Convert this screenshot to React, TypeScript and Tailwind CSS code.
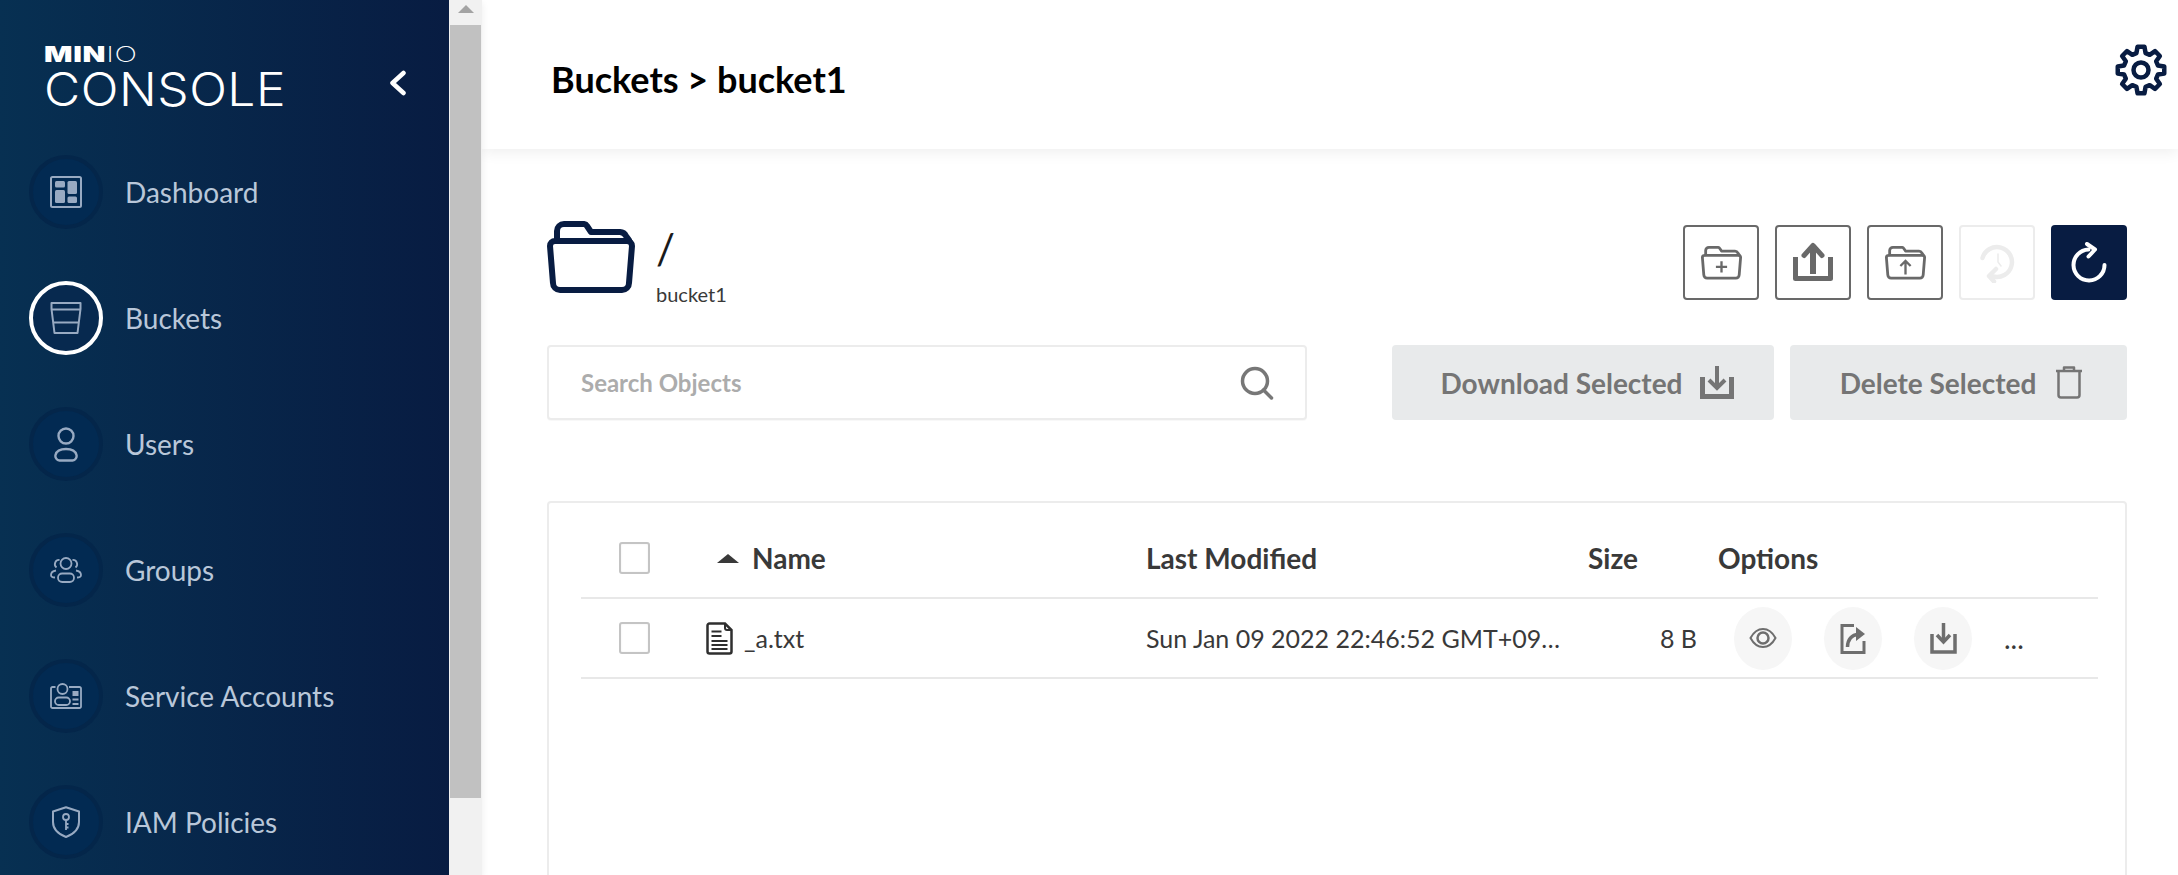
import {ReactNode} from "react";

const navItems = [
  {name: "Dashboard", icon: <DashboardIcon/>},
  {name: "Buckets", icon: <BucketIcon/>, active: true},
  {name: "Users", icon: <UserIcon/>},
  {name: "Groups", icon: <GroupIcon/>},
  {name: "Service Accounts", icon: <AccountIcon/>},
  {name: "IAM Policies", icon: <ShieldIcon/>},
]

function DashboardIcon() {
  return (
    <svg width="32" height="32" viewBox="0 0 32 32" fill="currentColor">
      <rect x="1" y="1" width="30" height="30" rx="1.5" fill="none" stroke="currentColor" strokeWidth="2"/>
      <rect x="5" y="5" width="10" height="6.5" rx="1.5"/>
      <rect x="5" y="14" width="10" height="13" rx="1.5"/>
      <rect x="17.5" y="5" width="9.5" height="13" rx="1.5"/>
      <rect x="17.5" y="20.5" width="9.5" height="6.5" rx="1.5"/>
    </svg>
  )
}

function BucketIcon() {
  return (
    <svg width="32" height="32" viewBox="0 0 32 32" fill="none" stroke="currentColor" strokeWidth="2">
      <path d="M1.5 1h29v6l-3 24h-23l-3-24z" strokeLinejoin="round"/>
      <path d="M1.5 7.5h29M3.5 20.5h25"/>
    </svg>
  )
}

function UserIcon() {
  return (
    <svg width="24" height="35" viewBox="0 0 24 35" fill="none" stroke="currentColor" strokeWidth="2.400">
      <circle cx="12" cy="9" r="7.500"/>
      <path d="M5.500 33.500h13a4.500 4.500 0 0 0 4-5.500c-1-4-5.500-6-10.500-6s-9.500 2-10.500 6a4.500 4.500 0 0 0 4 5.500z"/>
    </svg>
  )
}

function GroupIcon() {
  return (
    <svg width="32" height="26" viewBox="0 0 32 26" fill="none" stroke="currentColor" strokeWidth="1.8">
      <circle cx="16" cy="6.5" r="5.5"/>
      <rect x="8" y="16.5" width="16" height="8.5" rx="4.2"/>
      <path d="M9.5 3a4.2 4.2 0 0 0-3 7.5M22.5 3a4.2 4.2 0 0 1 3 7.5"/>
      <path d="M6 13.5c-3 .5-5 2.5-5 4.5 0 1.500 1.200 2.500 4 2.500M26 13.500c3 .5 5 2.500 5 4.500 0 1.500-1.200 2.500-4 2.500"/>
    </svg>
  )
}

function AccountIcon() {
  return (
    <svg width="32" height="26" viewBox="0 0 32 26" fill="none" stroke="currentColor" strokeWidth="1.8">
      <path d="M5.500 4H2.500A1.500 1.500 0 0 0 1 5.500v18A1.500 1.500 0 0 0 2.500 25h27a1.500 1.500 0 0 0 1.500-1.500v-18A1.500 1.500 0 0 0 29.500 4H19"/>
      <circle cx="12.500" cy="6" r="5"/>
      <rect x="5" y="14.500" width="15" height="7.500" rx="3.700"/>
      <rect x="22.500" y="8" width="6" height="5" fill="currentColor" stroke="none"/>
      <path d="M22.500 16.500h6M22.500 21h6"/>
    </svg>
  )
}

function ShieldIcon() {
  return (
    <svg width="28" height="32" viewBox="0 0 28 32" fill="none" stroke="currentColor" strokeWidth="2">
      <path d="M14 1.200 L27 5.500 V16c0 7-5 12-13 15C6 28 1 23 1 16V5.500z" strokeLinejoin="round"/>
      <circle cx="14" cy="11" r="3" strokeWidth="1.800"/>
      <path d="M14 14v10M14 18h2.500M14 21.500h2.500" strokeWidth="1.800"/>
    </svg>
  )
}

function FolderShape({strokeWidth = 6}: {strokeWidth?: number}) {
  return (
    <g fill="none" stroke="currentColor" strokeWidth={strokeWidth} strokeLinejoin="round" strokeLinecap="round">
      <path d="M8 21H80a5 5 0 0 1 5 5L82 63a7 7 0 0 1-7 7H13a7 7 0 0 1-7-7L3 26a5 5 0 0 1 5-5z"/>
      <path d="M10 20V11a7 7 0 0 1 7-7H37a4 4 0 0 1 3 2l4 6h29a7 7 0 0 1 6 4l3 4"/>
    </g>
  )
}

function GearIcon() {
  const teeth = 8
  const pts: string[] = []
  for (let i = 0; i < teeth; i++) {
    const a = (i / teeth) * Math.PI * 2 - Math.PI / 2
    const step = (Math.PI * 2) / teeth
    const corners: [number, number][] = [[17.5, -0.27], [23.5, -0.15], [23.5, 0.15], [17.5, 0.27]]
    corners.forEach(([r, o]) => {
      const t = a + o * step * 1.25
      pts.push(`${(26 + r * Math.cos(t)).toFixed(2)},${(26 + r * Math.sin(t)).toFixed(2)}`)
    })
  }
  return (
    <svg width="52" height="52" viewBox="0 0 52 52" fill="none" stroke="#081C42" strokeWidth="4.500" strokeLinejoin="round">
      <polygon points={pts.join(" ")}/>
      <circle cx="26" cy="26" r="7.500"/>
    </svg>
  )
}

function IconButton({children, className}: {children: ReactNode, className: string}) {
  return (
    <button type="button" className={`flex h-[75px] w-[76px] items-center justify-center rounded-[4px] border-2 ${className}`}>
      {children}
    </button>
  )
}

function Checkbox() {
  return <div className="h-[32px] w-[31px] rounded-[3px] border-2 border-[#c4c4c4] bg-white shadow-[inset_0_0_2px_#00000014]"/>
}

function RoundOption({children}: {children: ReactNode}) {
  return (
    <div className="flex h-[63px] w-[58px] items-center justify-center rounded-[50%] bg-[#f6f6f6] text-[#6e6e6e]">
      {children}
    </div>
  )
}

export default function App() {
  return (
    <div className="flex h-screen w-full overflow-hidden bg-white font-['Lato',sans-serif]">
      <div className="z-10 flex shrink-0 shadow-[0_3px_7px_#00000014]">
        <aside className="flex w-[449px] flex-col bg-[linear-gradient(90deg,#073052_0%,#081C42_100%)]">
          <div className="relative h-[155px] pl-[44px] pt-[39px] text-white">
            <div className="flex h-[30px] origin-left scale-x-[1.42] items-center font-['Inter',sans-serif] text-[21px] leading-none tracking-[0.5px]">
              <span className="font-black">MIN</span><span className="font-extralight">IO</span>
            </div>
            <div className="-mt-[3px] origin-left scale-x-[1.08] font-['Inter',sans-serif] text-[46px] font-light leading-[46px] tracking-[0.5px]">CONSOLE</div>
            <svg className="absolute left-[389px] top-[70px]" width="18" height="26" viewBox="0 0 18 26" fill="none" stroke="white" strokeWidth="4.500" strokeLinecap="round" strokeLinejoin="round">
              <path d="M14.500 3 L3.500 13 L14.500 23"/>
            </svg>
          </div>
          <nav className="flex flex-col gap-[52px] pl-[29px]">
            {navItems.map((item) => (
              <div key={item.name} className="flex items-center gap-[22px]">
                <div className={`flex h-[74px] w-[74px] items-center justify-center rounded-full border-4 text-[#98aac2] ${item.active ? "border-white bg-[#07294f]" : "border-[#04264a] bg-[#022a52]"}`}>
                  {item.icon}
                </div>
                <span className="text-[28px] leading-none text-[#b9c7d9]">{item.name}</span>
              </div>
            ))}
          </nav>
        </aside>
        <div className="flex w-[33px] flex-col bg-[#f1f1f1]">
          <div className="flex h-[25px] items-start justify-center pt-[5px]">
            <div className="h-0 w-0 border-x-[8px] border-b-[8px] border-x-transparent border-b-[#a3a3a3]"/>
          </div>
          <div className="mx-[1px] h-[773px] bg-[#c1c1c1] pl-[1px]"/>
        </div>
      </div>

      <main className="flex min-w-0 flex-1 flex-col">
        <header className="flex h-[149px] shrink-0 justify-between pl-[69px] pr-[11px] shadow-[0_3px_14px_#00000012]">
          <h1 className="mt-[55px] text-[36px] font-bold leading-[48px] text-black">Buckets &gt; bucket1</h1>
          <div className="mt-[44px]"><GearIcon/></div>
        </header>

        <div className="flex flex-col pl-[65px] pr-[51px]">
          <div className="flex h-[151px] items-start justify-between pt-[71px]">
            <div className="flex items-start gap-[21px]">
              <svg width="88" height="73" viewBox="0 0 88 73" className="text-[#081C42]"><FolderShape/></svg>
              <div className="flex flex-col">
                <span className="mt-[3px] text-[42px] leading-[50px] text-[#1a1a1a]">/</span>
                <span className="mt-[9px] text-[20px] leading-[24px] text-[#393939]">bucket1</span>
              </div>
            </div>
            <div className="flex gap-[16px] pt-[5px]">
              <IconButton className="border-[#696969] text-[#696969]">
                <svg width="41" height="35" viewBox="0 0 88 73"><FolderShape/><path d="M44 34v24M32 46h24" stroke="currentColor" strokeWidth="5" fill="none"/></svg>
              </IconButton>
              <IconButton className="border-[#696969] text-[#696969]">
                <svg width="40" height="41" viewBox="0 0 40 41" fill="none" stroke="currentColor">
                  <path d="M20 32V4" strokeWidth="6"/>
                  <path d="M11 13.500 L20 3.500 L29 13.500" strokeWidth="5" strokeLinejoin="round" strokeLinecap="round"/>
                  <path d="M2.500 15v21.500h35V15" strokeWidth="5" strokeLinejoin="round"/>
                </svg>
              </IconButton>
              <IconButton className="border-[#696969] text-[#696969]">
                <svg width="41" height="35" viewBox="0 0 88 73"><FolderShape/><path d="M44 62V34M33 44l11-11 11 11" stroke="currentColor" strokeWidth="5" fill="none"/></svg>
              </IconButton>
              <IconButton className="border-[#ececec] text-[#ececec]">
                <svg width="36" height="40" viewBox="0 0 36 40" fill="none" stroke="currentColor" strokeLinecap="round">
                  <path d="M3.500 15A15 15 0 1 1 14 33.500" strokeWidth="4.500"/>
                  <path d="M17 26l-7 7 5 5.500" strokeWidth="4.500" strokeLinejoin="round"/>
                  <path d="M19 11v8l3 4" strokeWidth="1.500"/>
                </svg>
              </IconButton>
              <button type="button" className="flex h-[75px] w-[76px] items-center justify-center rounded-[4px] bg-[#081C42] text-white">
                <svg width="36" height="41" viewBox="0 0 36 41" fill="none" stroke="currentColor" strokeWidth="4" strokeLinecap="round" strokeLinejoin="round">
                  <path d="M17.500 7.500A15.500 15.500 0 1 0 33.500 23"/>
                  <path d="M16 2l8 5.500-6.500 7"/>
                </svg>
              </button>
            </div>
          </div>

          <div className="mt-[45px] flex items-center justify-between">
            <div className="flex h-[75px] w-[760px] items-center justify-between rounded-[4px] border-2 border-[#ececec] bg-white pl-[32px] pr-[31px] shadow-[0_1px_1px_#00000008]">
              <span className="text-[24px] font-bold text-[#acacac]">Search Objects</span>
              <svg width="34" height="34" viewBox="0 0 34 34" fill="none" stroke="#777" strokeWidth="3.500" strokeLinecap="round">
                <circle cx="15" cy="15" r="12.500"/>
                <path d="M23.500 24 L31.500 32"/>
              </svg>
            </div>
            <div className="flex gap-[16px]">
              <button type="button" className="flex h-[75px] w-[382px] items-center justify-center gap-[17px] rounded-[4px] bg-[#e8eaeb] pl-[8px] text-[28px] font-bold text-[#757575]">
                Download Selected
                <svg width="34" height="33" viewBox="0 0 34 33" fill="none" stroke="currentColor">
                  <path d="M17 0v22" strokeWidth="4"/>
                  <path d="M9 14l8 8 8-8" strokeWidth="4"/>
                  <path d="M2.500 11v19.500h29V11" strokeWidth="5"/>
                </svg>
              </button>
              <button type="button" className="flex h-[75px] w-[337px] items-center justify-center gap-[19px] rounded-[4px] bg-[#e8eaeb] pl-[6px] text-[28px] font-bold text-[#757575]">
                Delete Selected
                <svg width="28" height="33" viewBox="0 0 28 33" fill="none" stroke="currentColor" strokeWidth="2.500">
                  <path d="M1 5h26M9 5V1.500h10V5" strokeLinejoin="round"/>
                  <path d="M3.500 5v24a2.500 2.500 0 0 0 2.500 2.500h16a2.500 2.500 0 0 0 2.500-2.500V5"/>
                </svg>
              </button>
            </div>
          </div>

          <div className="mt-[81px] h-[500px] rounded-[4px] border-2 border-[#ececec] pl-[32px] pr-[27px] text-[#393939]">
            <div className="grid h-[96px] grid-cols-[125px_440px_442px_130px_1fr] items-center border-b-2 border-[#e8e8e8] pt-[16px] text-[28px] font-bold leading-none">
              <div className="pl-[38px]"><Checkbox/></div>
              <div className="flex items-center gap-[13px] pl-[11px]">
                <div className="h-0 w-0 border-x-[11px] border-b-[9px] border-x-transparent border-b-[#393939]"/>
                Name
              </div>
              <div>Last Modified</div>
              <div>Size</div>
              <div>Options</div>
            </div>
            <div className="grid h-[80px] grid-cols-[125px_440px_442px_130px_1fr] items-center border-b-2 border-[#e8e8e8] text-[25px] leading-none">
              <div className="pl-[38px]"><Checkbox/></div>
              <div className="flex items-center gap-[11px]">
                <svg width="27" height="33" viewBox="0 0 27 33" fill="none" stroke="#2f2f2f" strokeWidth="2.500">
                  <path d="M3.500 1.500H19l6.500 6.500v21.500a2 2 0 0 1-2 2h-20a2 2 0 0 1-2-2v-26a2 2 0 0 1 2-2z"/>
                  <path d="M19 1.500V6a2 2 0 0 0 2 2h4.500M5.500 9.500h10M5.500 14h10M5.500 19h16M5.500 23h16M5.500 27h16" strokeWidth="2"/>
                </svg>
                _a.txt
              </div>
              <div className="whitespace-nowrap">Sun Jan 09 2022 22:46:52 GMT+09…</div>
              <div className="pr-[21px] text-right">8 B</div>
              <div className="flex items-center gap-[32px] pl-[16px]">
                <RoundOption>
                  <svg width="28" height="22" viewBox="0 0 28 22" fill="none" stroke="currentColor" strokeWidth="2">
                    <path d="M1.500 11C5 4.500 9 2 14 2s9 2.500 12.500 9C23 17.500 19 20 14 20S5 17.500 1.500 11z"/>
                    <circle cx="14" cy="11" r="5.500" strokeWidth="2.500"/>
                  </svg>
                </RoundOption>
                <RoundOption>
                  <svg width="26" height="31" viewBox="0 0 26 31" fill="none" stroke="currentColor" strokeWidth="3">
                    <path d="M14 2.500H2v27h22V18"/>
                    <path d="M7.500 24c0-7 4-12.500 11-12.500" strokeWidth="3.500"/>
                    <path d="M16 4l9 7-9 7z" fill="currentColor" stroke="none"/>
                  </svg>
                </RoundOption>
                <RoundOption>
                  <svg width="27" height="31" viewBox="0 0 27 31" fill="none" stroke="currentColor" strokeWidth="3.500">
                    <path d="M13.500 0v19"/>
                    <path d="M7 12l6.500 7 6.500-7"/>
                    <path d="M2 11v18h23V11" strokeWidth="3.500"/>
                  </svg>
                </RoundOption>
                <span className="text-[28px] text-[#393939]">...</span>
              </div>
            </div>
          </div>
        </div>
      </main>
    </div>
  )
}
